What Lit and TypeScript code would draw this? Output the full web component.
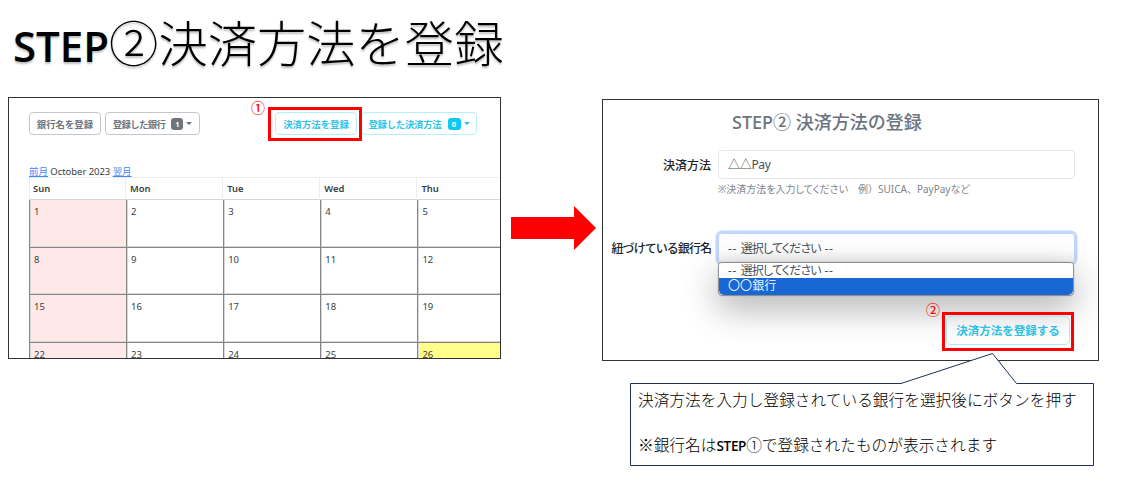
import { LitElement, html, css } from "lit";
import { customElement } from "lit/decorators.js";

const WEEKDAYS = ["Sun", "Mon", "Tue", "Wed", "Thu"];
const WEEKS = [
  [1, 2, 3, 4, 5],
  [8, 9, 10, 11, 12],
  [15, 16, 17, 18, 19],
  [22, 23, 24, 25, 26],
];
const TODAY = 26;

@customElement("calendar-panel")
class CalendarPanel extends LitElement {
  static styles = css`
    :host {
      display: block;
      position: relative;
      box-sizing: border-box;
      width: 493px;
      height: 262px;
      border: 1px solid #333;
      overflow: hidden;
      background: #fff;
      color: #383d42;
      font-family: "Noto Sans", "Noto Sans CJK JP", sans-serif;
      font-size: 9.4px;
    }
    .toolbar {
      display: flex;
      align-items: flex-start;
      padding: 14px 23px 0 20px;
      gap: 4px;
    }
    .btn {
      box-sizing: border-box;
      height: 23px;
      border: 1.5px solid #c3c7cb;
      border-radius: 4px;
      display: flex;
      align-items: center;
      justify-content: center;
      white-space: nowrap;
      color: #6c757d;
      font-family: "Noto Sans CJK JP", sans-serif;
      font-weight: 700;
      line-height: 20px;
    }
    .bank { width: 72px; }
    .banks { width: 95px; letter-spacing: -0.6px; }
    .pay { width: 82px; margin-left: auto; }
    .pays { width: 116px; letter-spacing: -0.25px; }
    .info { border-color: #b5effa; color: #2bc4e8; }
    .badge {
      background: #6c757d;
      color: #fff;
      border-radius: 3px;
      height: 12px;
      width: 12px;
      margin-left: 6px;
      font: 700 7.5px/12px "Noto Sans", sans-serif;
      text-align: center;
      letter-spacing: 0;
    }
    .info .badge { background: #0dcaf0; width: 13px; }
    .caret {
      border: 3px solid transparent;
      border-top-color: currentColor;
      border-bottom: 0;
      margin-left: 3px;
    }
    .month {
      margin: 28px 0 0 20px;
      height: 15px;
      line-height: 17px;
      font-size: 9.5px;
      letter-spacing: -0.05px;
      white-space: nowrap;
    }
    a { color: #3f87fd; text-decoration: underline; }
    .grid {
      display: grid;
      grid-template-columns: repeat(5, 97.1px);
      grid-template-rows: 22px repeat(4, 47.5px);
      margin-left: 20px;
      border-top: 1px solid #ededee;
      margin-top: -1px;
    }
    .head {
      box-sizing: border-box;
      border-right: 1px solid #ededee;
      border-bottom: 1px solid #d5d7d8;
      font-weight: 600;
      line-height: 22px;
      padding-left: 4px;
    }
    .head:first-child { border-left: 1px solid #ededee; padding-left: 3px; }
    .day {
      box-sizing: border-box;
      border-left: 1px solid #858585;
      border-bottom: 1px solid #858585;
      line-height: 13px;
      padding: 5px 0 0 4px;
      font-size: 9.5px;
      box-shadow: inset 1px 0 #d8d8d8, inset 0 -1px #d8d8d8;
    }
    .sunday { background: #ffe9e8; }
    .today { background: #ffff8a; }
    .mark {
      position: absolute;
      left: 242px;
      top: 2px;
      color: #f00;
      font: 500 14px/14px "Noto Sans CJK JP", sans-serif;
    }
    .ring {
      position: absolute;
      box-sizing: border-box;
      left: 259px;
      top: 9px;
      width: 94px;
      height: 34px;
      border: 3px solid #f00;
    }
  `;

  render() {
    return html`
      <div class="toolbar">
        <div class="btn bank">銀行名を登録</div>
        <div class="btn banks">登録した銀行<span class="badge">1</span><span class="caret"></span></div>
        <div class="btn info pay">決済方法を登録</div>
        <div class="btn info pays">登録した決済方法<span class="badge">0</span><span class="caret"></span></div>
      </div>
      <div class="month"><a>前月</a> October 2023 <a>翌月</a></div>
      <div class="grid">
        ${WEEKDAYS.map((d) => html`<div class="head">${d}</div>`)}
        ${WEEKS.flat().map(
          (n) => html`<div class="day ${n % 7 === 1 ? "sunday" : ""} ${n === TODAY ? "today" : ""}">${n}</div>`
        )}
      </div>
      <span class="mark">①</span>
      <div class="ring"></div>
    `;
  }
}

@customElement("payment-form")
class PaymentForm extends LitElement {
  static styles = css`
    :host {
      display: block;
      position: relative;
      box-sizing: border-box;
      width: 497px;
      height: 262px;
      border: 1px solid #333;
      overflow: hidden;
      background: #fff;
      color: #495057;
      font-family: "Noto Sans", "Noto Sans CJK JP", sans-serif;
      font-size: 12px;
    }
    .title {
      padding: 8px 0 0 129px;
      height: 50px;
      box-sizing: border-box;
      line-height: 28px;
      font-size: 18px;
      font-weight: 500;
      color: #6c757d;
      white-space: nowrap;
    }
    .row {
      display: grid;
      grid-template-columns: 108px 357px;
      column-gap: 7px;
    }
    .label {
      text-align: right;
      font-weight: 500;
      color: #212529;
      line-height: 30px;
      white-space: nowrap;
      font-family: "Noto Sans CJK JP", sans-serif;
    }
    .narrow { letter-spacing: -0.95px; line-height: 30px; }
    .control {
      box-sizing: border-box;
      height: 29px;
      border: 1px solid #e4e7e9;
      border-radius: 4px;
      padding-left: 9px;
      line-height: 28px;
      letter-spacing: -0.3px;
    }
    .hint {
      padding: 1px 0 0 115px;
      height: 53px;
      box-sizing: border-box;
      font-size: 10px;
      line-height: 16px;
      color: #7d858c;
      white-space: nowrap;
    }
    .kana { font-feature-settings: "palt"; }
    .full { font-feature-settings: normal; }
    .choice { letter-spacing: -0.85px; }
    .dash { letter-spacing: 0.6px; }
    .select {
      position: relative;
      height: 30px;
      line-height: 29px;
      border-color: #b9d3fc;
      box-shadow: 0 0 0 2.5px #c2d9fe;
      background: linear-gradient(#fff 60%, #f1f1f1);
    }
    .menu {
      position: absolute;
      left: 0;
      top: 29px;
      width: 354px;
      height: 32px;
      border-radius: 3px 3px 5px 5px;
      overflow: hidden;
      background: #fff;
      line-height: 16px;
    }
    .drop {
      position: absolute;
      left: 0;
      top: 29px;
      width: 354px;
      height: 32px;
      border-radius: 4px;
      box-shadow: 0 0 1px 0.5px #888, 0 12px 34px 2px rgba(0, 0, 0, 0.3);
    }
    .option { height: 15px; padding-left: 9px; }
    .active { background: #1967d2; color: #eaf1fb; height: 17px; letter-spacing: 0.1px; }
    .submit {
      position: absolute;
      box-sizing: border-box;
      left: 343px;
      top: 216px;
      width: 124px;
      height: 29px;
      border: 1.5px solid #a9e8f5;
      border-radius: 5px;
      color: #2bc0e4;
      font: 700 11.5px/27px "Noto Sans CJK JP", sans-serif;
      text-align: center;
      white-space: nowrap;
    }
    .mark {
      position: absolute;
      left: 323px;
      top: 202px;
      color: #f00;
      font: 500 14px/14px "Noto Sans CJK JP", sans-serif;
    }
    .ring {
      position: absolute;
      box-sizing: border-box;
      left: 339px;
      top: 212px;
      width: 132px;
      height: 39px;
      border: 3px solid #f00;
    }
  `;

  private placeholder() {
    return html`<span class="dash">-- </span>選択してください<span class="dash"> --</span>`;
  }

  render() {
    return html`
      <div class="title">STEP② 決済方法の登録</div>
      <div class="row">
        <span class="label">決済方法</span>
        <div class="control">△△Pay</div>
      </div>
      <div class="hint kana">※決済方法を入力してください　<span class="full">例）</span>SUICA<span class="full">、</span>PayPayなど</div>
      <div class="row">
        <span class="label narrow">紐づけている銀行名</span>
        <div class="control select">
          <span class="kana choice">${this.placeholder()}</span>
          <div class="drop"></div>
          <div class="menu">
            <div class="option kana choice">${this.placeholder()}</div>
            <div class="option active">〇〇銀行</div>
          </div>
        </div>
      </div>
      <div class="submit">決済方法を登録する</div>
      <span class="mark">②</span>
      <div class="ring"></div>
    `;
  }
}

@customElement("app-root")
class AppRoot extends LitElement {
  static styles = css`
    :host {
      display: block;
      position: relative;
      box-sizing: border-box;
      width: 1129px;
      height: 482px;
      background: #fff;
      overflow: hidden;
      color: #000;
      font-family: "Noto Sans CJK JP", sans-serif;
    }
    h1 {
      margin: 0;
      height: 97px;
      box-sizing: border-box;
      padding: 5px 0 0 13px;
      font-size: 49.3px;
      line-height: 72px;
      font-weight: 300;
      white-space: nowrap;
      text-shadow: 0 2px 2px rgba(0, 0, 0, 0.25);
    }
    .latin {
      font-family: "Open Sans", sans-serif;
      font-weight: 600;
      font-size: 42px;
    }
    .stage { display: flex; padding-left: 8px; }
    .arrow { margin: 109px 6px 0 10px; width: 85px; height: 44px; flex: none; }
    payment-form { margin-top: 2px; }
    .callout {
      position: absolute;
      left: 630px;
      top: 352px;
      width: 465px;
      height: 115px;
    }
    .shape { position: absolute; inset: 0; }
    .note {
      position: relative;
      padding: 34px 0 0 8px;
      font-size: 15.7px;
      line-height: 28px;
      font-weight: 300;
      white-space: nowrap;
    }
    .note p { margin: 0 0 17px; }
    .small { font-family: "Open Sans", sans-serif; font-weight: 600; font-size: 13.5px; letter-spacing: -0.3px; }
  `;

  render() {
    return html`
      <h1><span class="latin">STEP</span>②決済方法を登録</h1>
      <div class="stage">
        <calendar-panel></calendar-panel>
        <svg class="arrow" viewBox="0 0 85 44">
          <path d="M0 11H63V0L85 22L63 44V33H0Z" fill="#f00" />
        </svg>
        <payment-form></payment-form>
      </div>
      <div class="callout">
        <svg class="shape" width="465" height="115" viewBox="0 0 465 115">
          <path
            d="M.5 31.5H271L362.5 1.5L386.5 31.5H463.5V113.5H.5Z"
            fill="#fff"
            stroke="#1c3055"
            stroke-width="1"
          />
        </svg>
        <div class="note">
          <p>決済方法を入力し登録されている銀行を選択後にボタンを押す</p>
          <p>※銀行名は<span class="small">STEP</span>①で登録されたものが表示されます</p>
        </div>
      </div>
    `;
  }
}
